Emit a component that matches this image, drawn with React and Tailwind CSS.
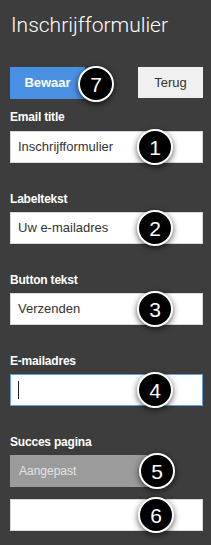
import React from 'react'

const sans = { fontFamily: '"Liberation Sans", Arial, sans-serif' }

function Badge({ n, className = '' }) {
  return (
    <span
      className={`absolute top-1/2 -translate-y-1/2 w-[36px] h-[36px] rounded-full bg-black border-[2.5px] border-white flex items-center justify-center text-white text-[21px] leading-none shadow-[0_2px_6px_rgba(0,0,0,0.65)] ${className}`}
    >
      {n}
    </span>
  )
}

function Field({ label, value, n, focused, first }) {
  return (
    <div className={first ? 'mt-[11px]' : 'mt-[29px]'}>
      <p className="text-[12px] leading-[14px] font-bold text-white tracking-[-0.2px]">{label}</p>
      <div className={`relative ${first ? 'mt-[7px]' : 'mt-[6px]'}`}>
        <div
          className={`h-[32px] bg-white flex items-center px-[7px] text-[13px] text-[#333] ${
            focused ? 'border border-[#6aa0e0]' : 'border border-[#d8d8d8]'
          }`}
        >
          {focused ? <span className="w-px h-[18px] bg-[#222]" /> : value}
        </div>
        <Badge n={n} className="left-[127px]" />
      </div>
    </div>
  )
}

export default function App() {
  return (
    <div className="w-[211px] min-h-[545px] bg-[#3d3d3d] pl-[10px] pr-[8px] pt-[13px]" style={sans}>
      <h1
        className="text-[21px] leading-[25px] font-light text-white pl-px"
        style={{ fontFamily: 'Roboto, "Liberation Sans", sans-serif' }}
      >
        Inschrijfformulier
      </h1>

      <div className="relative mt-[29px] flex justify-between h-[32px]">
        <button className="w-[75px] h-[32px] bg-[#4a90e2] text-white text-[13px] font-bold">Bewaar</button>
        <button className="w-[65px] h-[31px] bg-[#f0f0f0] text-[#333] text-[13px]">Terug</button>
        <Badge n="7" className="left-[68px] mt-[1px]" />
      </div>

      <Field first label="Email title" value="Inschrijfformulier" n="1" />
      <Field label="Labeltekst" value="Uw e-mailadres" n="2" />
      <Field label="Button tekst" value="Verzenden" n="3" />
      <Field label="E-mailadres" value="" n="4" focused />

      <div className="mt-[29px]">
        <p className="text-[12px] leading-[14px] font-bold text-white tracking-[-0.2px]">Succes pagina</p>
        <div className="relative mt-[6px]">
          <div className="w-[137px] h-[32px] bg-[#9b9b9b] flex items-center px-[9px] text-[12px] text-[#e4e4e4]">
            Aangepast
          </div>
          <Badge n="5" className="left-[129px]" />
        </div>
        <div className="relative mt-[12px]">
          <div className="h-[32px] bg-white border border-[#d8d8d8]" />
          <Badge n="6" className="left-[128px]" />
        </div>
      </div>
    </div>
  )
}
